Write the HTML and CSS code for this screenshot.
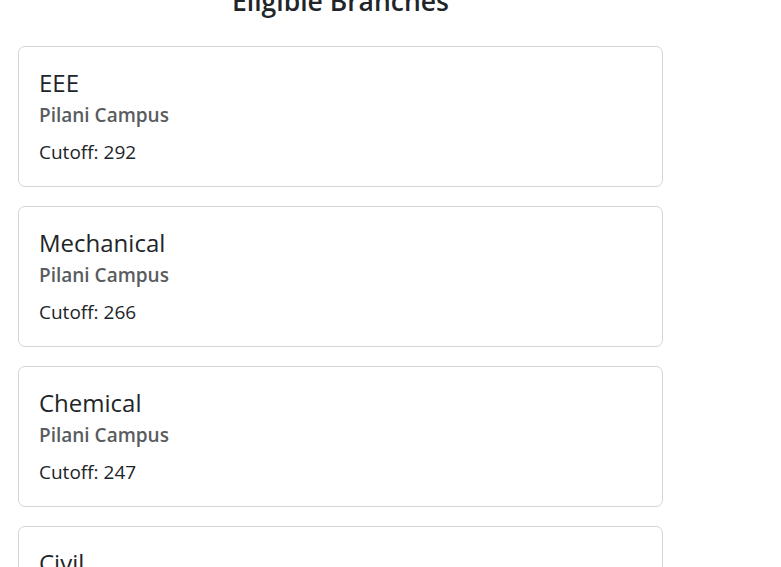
FILE: index.html
```html
<!DOCTYPE html>
<html lang="en">
<head>
<meta charset="utf-8">
<title>Eligible Branches</title>
<link rel="stylesheet" href="styles.css">
</head>
<body>
<main class="page">
  <h2 class="heading">Eligible Branches</h2>
  <div class="list">
    <div class="card">
      <h5 class="card-title">EEE</h5>
      <h6 class="card-subtitle">Pilani Campus</h6>
      <p class="card-text">Cutoff: 292</p>
    </div>
    <div class="card">
      <h5 class="card-title">Mechanical</h5>
      <h6 class="card-subtitle">Pilani Campus</h6>
      <p class="card-text">Cutoff: 266</p>
    </div>
    <div class="card">
      <h5 class="card-title">Chemical</h5>
      <h6 class="card-subtitle">Pilani Campus</h6>
      <p class="card-text">Cutoff: 247</p>
    </div>
    <div class="card">
      <h5 class="card-title">Civil</h5>
      <h6 class="card-subtitle">Pilani Campus</h6>
      <p class="card-text">Cutoff: 230</p>
    </div>
  </div>
</main>
</body>
</html>
```
FILE: styles.css
```css
html, body {
  margin: 0;
  padding: 0;
  background: #fff;
  overflow: hidden;
}
body {
  font-family: "Open Sans", "Noto Sans", sans-serif;
  color: #212529;
}
.page {
  width: 645px;
  padding-left: 18px;
}
.heading {
  margin: -16px 0 28px;
  font-size: 26.5px;
  line-height: 34px;
  font-weight: 600;
  text-align: center;
  color: #212529;
}
.list {
  display: flex;
  flex-direction: column;
  gap: 19px;
}
.card {
  border: 1px solid #d5d5d5;
  border-radius: 7px;
  padding: 21px 20px;
  height: 141px;
  box-sizing: border-box;
}
.card-title {
  margin: 0 0 7px;
  font-size: 24px;
  line-height: 29px;
  font-weight: 500;
}
.card-subtitle {
  margin: 0 0 11px;
  font-size: 19px;
  line-height: 23px;
  font-weight: 600;
  color: #595c5f;
}
.card-text {
  margin: 0;
  font-size: 19px;
  line-height: 29px;
}
```
